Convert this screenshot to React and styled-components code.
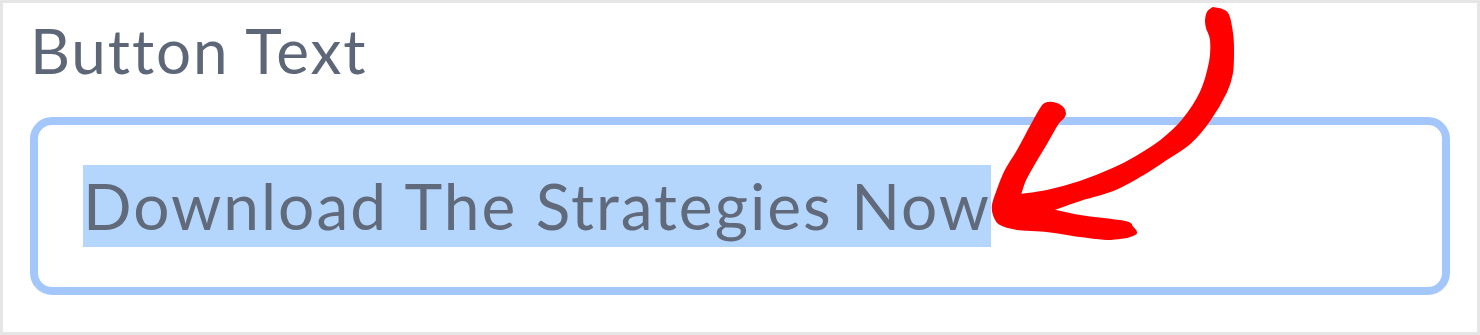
import React from 'react';
import styled, { createGlobalStyle } from 'styled-components';

const GlobalStyle = createGlobalStyle`
  html, body {
    margin: 0;
    padding: 0;
    background: #ffffff;
  }
`;

const Frame = styled.div`
  position: relative;
  box-sizing: border-box;
  width: 1480px;
  height: 335px;
  border: 3px solid #e6e6e6;
  background: #ffffff;
  padding: 16px 27px 0 27px;
  display: flex;
  flex-direction: column;
  gap: 36px;
  font-family: Lato, "Liberation Sans", sans-serif;
`;

const FieldLabel = styled.label`
  display: block;
  font-size: 62px;
  line-height: 62px;
  letter-spacing: 1.9px;
  color: #5e6778;
`;

const InputBox = styled.div`
  box-sizing: border-box;
  height: 178px;
  border: 8px solid #a4c7fb;
  border-radius: 22px;
  padding: 40px 45px;
  display: flex;
  align-items: center;
`;

const Selected = styled.span`
  display: inline-block;
  height: 82px;
  line-height: 82px;
  font-size: 64px;
  letter-spacing: 2px;
  color: #616a7a;
  background: #b4d6fd;
  white-space: nowrap;
`;

const Overlay = styled.svg`
  position: absolute;
  top: 0;
  left: 0;
  pointer-events: none;
`;

// catmull-rom through the points, as cubic bezier segments
function smooth(points, move) {
  let d = move ? `M${points[0][0]} ${points[0][1]}` : '';
  for (let i = 0; i < points.length - 1; i++) {
    const p0 = points[i - 1] || points[i];
    const p1 = points[i];
    const p2 = points[i + 1];
    const p3 = points[i + 2] || p2;
    const c1 = [p1[0] + (p2[0] - p0[0]) / 6, p1[1] + (p2[1] - p0[1]) / 6];
    const c2 = [p2[0] - (p3[0] - p1[0]) / 6, p2[1] - (p3[1] - p1[1]) / 6];
    d += ` C${c1[0].toFixed(1)} ${c1[1].toFixed(1)} ${c2[0].toFixed(1)} ${c2[1].toFixed(1)} ${p2[0]} ${p2[1]}`;
  }
  return d;
}

const outerCurve = [
  [1213, 8], [1227, 13], [1232, 33], [1233, 50], [1232, 73], [1226, 92], [1209, 121],
  [1190, 143], [1165, 160], [1140, 176], [1113, 190], [1080, 200], [1052, 210],
];
const lowerBarbTop = [[1052, 210], [1080, 216], [1125, 222], [1132, 227], [1136, 233], [1127, 237]];
const tipAndBarb = [
  [1127, 237], [1107, 239], [1080, 236], [1047, 231], [1017, 229], [1000, 224], [994, 215],
  [993, 205], [997, 192], [1005, 172], [1017, 152], [1030, 128], [1040, 110], [1045, 104],
  [1053, 103], [1062, 107], [1065, 113], [1063, 118], [1058, 123], [1047, 142], [1035, 162],
  [1025, 180], [1020, 195],
];
const innerCurve = [
  [1020, 195], [1047, 191], [1080, 182], [1113, 169], [1136, 157], [1162, 140], [1183, 120],
  [1201, 92], [1210, 62], [1211, 40], [1207, 28], [1206, 20], [1208, 12], [1213, 8],
];

const arrowPath =
  smooth(outerCurve, true) +
  smooth(lowerBarbTop) +
  smooth(tipAndBarb) +
  smooth(innerCurve) +
  ' Z';

const Arrow = () => (
  <Overlay width="1474" height="329" viewBox="3 3 1474 329">
    <path d={arrowPath} fill="#ff0000" stroke="#ff0000" strokeWidth="2" strokeLinejoin="round" />
  </Overlay>
);

const App = () => (
  <>
    <GlobalStyle />
    <Frame>
      <FieldLabel>Button Text</FieldLabel>
      <InputBox>
        <Selected>Download The Strategies Now</Selected>
      </InputBox>
      <Arrow />
    </Frame>
  </>
);

export default App;
